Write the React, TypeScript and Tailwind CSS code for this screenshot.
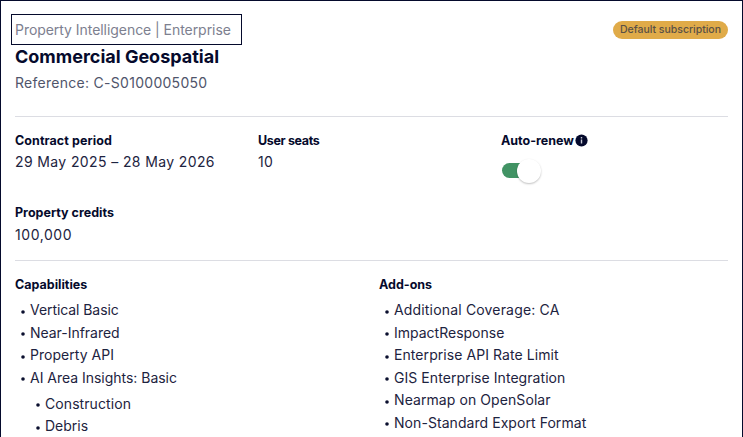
import { useState } from "react";
import type { ReactNode } from "react";

const capabilities = [
  { label: "Vertical Basic", tracking: "tracking-[-0.07px]" },
  { label: "Near-Infrared", tracking: "tracking-[-0.03px]" },
  { label: "Property API", tracking: "tracking-[0.04px]" },
  { label: "AI Area Insights: Basic", tracking: "tracking-[-0.02px]" },
];

const insights = [
  { label: "Construction", tracking: "tracking-[0.08px]" },
  { label: "Debris", tracking: "tracking-normal" },
];

const addOns = [
  { label: "Additional Coverage: CA", tracking: "tracking-[0.17px]" },
  { label: "ImpactResponse", tracking: "tracking-normal" },
  { label: "Enterprise API Rate Limit", tracking: "tracking-[0.07px]" },
  { label: "GIS Enterprise Integration", tracking: "tracking-[0.06px]" },
  { label: "Nearmap on OpenSolar", tracking: "tracking-[0.08px]" },
  { label: "Non-Standard Export Format", tracking: "tracking-[0.06px]" },
];

interface ItemProps {
  label: string;
  tracking: string;
}

function Item({ label, tracking }: ItemProps) {
  return (
    <li className="flex items-center h-[22.5px] text-sm whitespace-nowrap">
      <svg width="4" height="4" viewBox="0 0 4 4" className="mt-[3px] mr-[5px]">
        <circle cx="2" cy="2" r="1.8" fill="#0a0f2e" />
      </svg>
      <span className={tracking}>{label}</span>
    </li>
  );
}

interface FieldProps {
  label: ReactNode;
  children: ReactNode;
}

function Field({ label, children }: FieldProps) {
  return (
    <div className="h-[72px] leading-[22px]">
      <h2 className="flex items-center h-[22px] pt-px text-[12.5px] font-bold text-[#050a2c]">
        {label}
      </h2>
      {children}
    </div>
  );
}

function InfoIcon() {
  return (
    <svg width="13" height="13" viewBox="0 0 13 13" className="ml-px -mt-px">
      <circle cx="6.5" cy="6.5" r="6.1" fill="#050a2c" />
      <path d="M6.5 5.6v4M6.5 3.1v1.3" stroke="#c9cbd6" strokeWidth="1.4" />
    </svg>
  );
}

export default function App() {
  const [autoRenew, setAutoRenew] = useState(true);

  return (
    <div className="h-[437px] overflow-hidden border border-b-0 border-[#050a2c] bg-white px-[14px] pt-[13px] font-['Inter',sans-serif] text-[#1d2340]">
      <header className="flex items-start justify-between h-[102px]">
        <div className="whitespace-nowrap">
          <p className="-ml-1 flex items-center w-[231px] h-[31px] pt-px pl-[3px] border border-[#050a2c] text-sm tracking-[-0.05px] text-[#7d808f]">
            Property Intelligence | Enterprise
          </p>
          <h1 className="text-lg leading-6 font-bold text-[#050a2c]">Commercial Geospatial</h1>
          <p className="mt-0.5 text-sm leading-6 tracking-[0.28px] text-[#50556b]">
            Reference: C-S0100005050
          </p>
        </div>
        <span className="mt-[7px] flex items-center justify-center w-[115px] h-[18px] rounded-full bg-[#e0ab49] text-[10.5px] font-medium tracking-[-0.02px] text-[#5a5045] whitespace-nowrap">
          Default subscription
        </span>
      </header>

      <section className="grid grid-cols-3 gap-x-4 h-[144px] pt-3 border-t border-[#dcdde3]">
        <Field label={<span className="tracking-[0.07px]">Contract period</span>}>
          <p className="text-sm leading-[22px] tracking-[0.38px] whitespace-nowrap">
            29 May 2025 – 28 May 2026
          </p>
        </Field>
        <Field label={<span className="tracking-[-0.35px]">User seats</span>}>
          <p className="text-sm leading-[22px] tracking-[0.38px]">10</p>
        </Field>
        <Field
          label={
            <>
              <span>Auto-renew</span>
              <InfoIcon />
            </>
          }
        >
          <button
            role="switch"
            aria-checked={autoRenew}
            aria-label="Auto-renew"
            onClick={() => setAutoRenew(!autoRenew)}
            className={`mt-3 ml-px flex items-center w-[34px] h-[15px] rounded-full ${
              autoRenew ? "justify-end bg-[#419364]" : "justify-start bg-[#b5b7c2]"
            }`}
          >
            <span className="-mr-[5px] w-6 h-6 shrink-0 rounded-full bg-white shadow-[0_1px_2px_rgba(0,0,0,0.25)]" />
          </button>
        </Field>
        <Field label="Property credits">
          <p className="mt-px text-sm leading-[22px] tracking-[0.57px]">100,000</p>
        </Field>
      </section>

      <section className="grid grid-cols-2 gap-x-[15px] pt-3 border-t border-[#dcdde3]">
        <div>
          <h2 className="h-[22px] pt-px leading-[22px] text-[12.5px] font-bold text-[#050a2c]">
            Capabilities
          </h2>
          <ul className="mt-1 pl-[6px]">
            {capabilities.map((item) => (
              <Item key={item.label} {...item} />
            ))}
            <li className="mt-[3.5px]">
              <ul className="pl-[15px]">
                {insights.map((item) => (
                  <Item key={item.label} {...item} />
                ))}
              </ul>
            </li>
          </ul>
        </div>
        <div>
          <h2 className="h-[22px] pt-px leading-[22px] text-[12.5px] font-bold text-[#050a2c]">
            Add-ons
          </h2>
          <ul className="mt-1 pl-[6px]">
            {addOns.map((item) => (
              <Item key={item.label} {...item} />
            ))}
          </ul>
        </div>
      </section>
    </div>
  );
}
